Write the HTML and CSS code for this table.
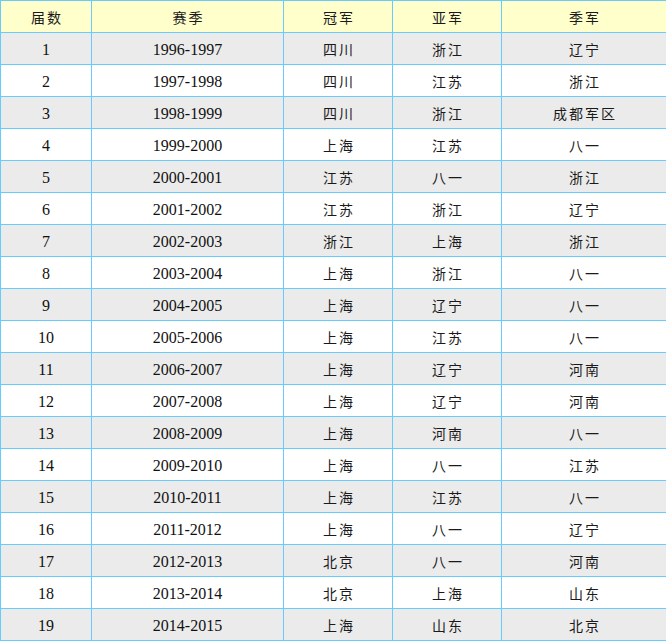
FILE: index.html
```html
<!DOCTYPE html>
<html lang="zh">
<head>
<meta charset="utf-8">
<title>届数</title>
<link rel="stylesheet" href="styles.css">
</head>
<body>
<table class="results">
<colgroup>
<col class="c1"><col class="c2"><col class="c3"><col class="c4"><col class="c5">
</colgroup>
<thead>
<tr class="head"><th>届数</th><th>赛季</th><th>冠军</th><th>亚军</th><th>季军</th></tr>
</thead>
<tbody>
<tr class="odd"><td class="num">1</td><td class="num">1996-1997</td><td>四川</td><td>浙江</td><td>辽宁</td></tr>
<tr><td class="num">2</td><td class="num">1997-1998</td><td>四川</td><td>江苏</td><td>浙江</td></tr>
<tr class="odd"><td class="num">3</td><td class="num">1998-1999</td><td>四川</td><td>浙江</td><td>成都军区</td></tr>
<tr><td class="num">4</td><td class="num">1999-2000</td><td>上海</td><td>江苏</td><td>八一</td></tr>
<tr class="odd"><td class="num">5</td><td class="num">2000-2001</td><td>江苏</td><td>八一</td><td>浙江</td></tr>
<tr><td class="num">6</td><td class="num">2001-2002</td><td>江苏</td><td>浙江</td><td>辽宁</td></tr>
<tr class="odd"><td class="num">7</td><td class="num">2002-2003</td><td>浙江</td><td>上海</td><td>浙江</td></tr>
<tr><td class="num">8</td><td class="num">2003-2004</td><td>上海</td><td>浙江</td><td>八一</td></tr>
<tr class="odd"><td class="num">9</td><td class="num">2004-2005</td><td>上海</td><td>辽宁</td><td>八一</td></tr>
<tr><td class="num">10</td><td class="num">2005-2006</td><td>上海</td><td>江苏</td><td>八一</td></tr>
<tr class="odd"><td class="num">11</td><td class="num">2006-2007</td><td>上海</td><td>辽宁</td><td>河南</td></tr>
<tr><td class="num">12</td><td class="num">2007-2008</td><td>上海</td><td>辽宁</td><td>河南</td></tr>
<tr class="odd"><td class="num">13</td><td class="num">2008-2009</td><td>上海</td><td>河南</td><td>八一</td></tr>
<tr><td class="num">14</td><td class="num">2009-2010</td><td>上海</td><td>八一</td><td>江苏</td></tr>
<tr class="odd"><td class="num">15</td><td class="num">2010-2011</td><td>上海</td><td>江苏</td><td>八一</td></tr>
<tr><td class="num">16</td><td class="num">2011-2012</td><td>上海</td><td>八一</td><td>辽宁</td></tr>
<tr class="odd"><td class="num">17</td><td class="num">2012-2013</td><td>北京</td><td>八一</td><td>河南</td></tr>
<tr><td class="num">18</td><td class="num">2013-2014</td><td>北京</td><td>上海</td><td>山东</td></tr>
<tr class="odd"><td class="num">19</td><td class="num">2014-2015</td><td>上海</td><td>山东</td><td>北京</td></tr>
</tbody>
</table>
</body>
</html>
```
FILE: styles.css
```css
html, body {
  margin: 0;
  padding: 0;
  background: #ffffff;
}

.results {
  border-collapse: collapse;
  table-layout: fixed;
  width: 666px;
  color: #111111;
  font-family: "Liberation Serif", "Noto Sans CJK SC", serif;
}

.c1 { width: 91px; }
.c2 { width: 192px; }
.c3 { width: 109px; }
.c4 { width: 109px; }
.c5 { width: 165px; }

.results th,
.results td {
  border: 1px solid #66ccff;
  height: 30px;
  padding: 1px 0 0 2px;
  text-align: center;
  vertical-align: middle;
  font-weight: normal;
  font-size: 14px;
  letter-spacing: 2px;
  line-height: 16px;
  color: #1a1a1a;
  font-family: "Noto Sans CJK SC", sans-serif;
}

.results td.num {
  font-family: "Liberation Serif", serif;
  font-size: 16px;
  letter-spacing: 0;
  height: 29px;
  padding: 2px 0 0 0;
  color: #111111;
}

.head th {
  background: #ffffcc;
}

.odd td {
  background: #ebebeb;
}
```
